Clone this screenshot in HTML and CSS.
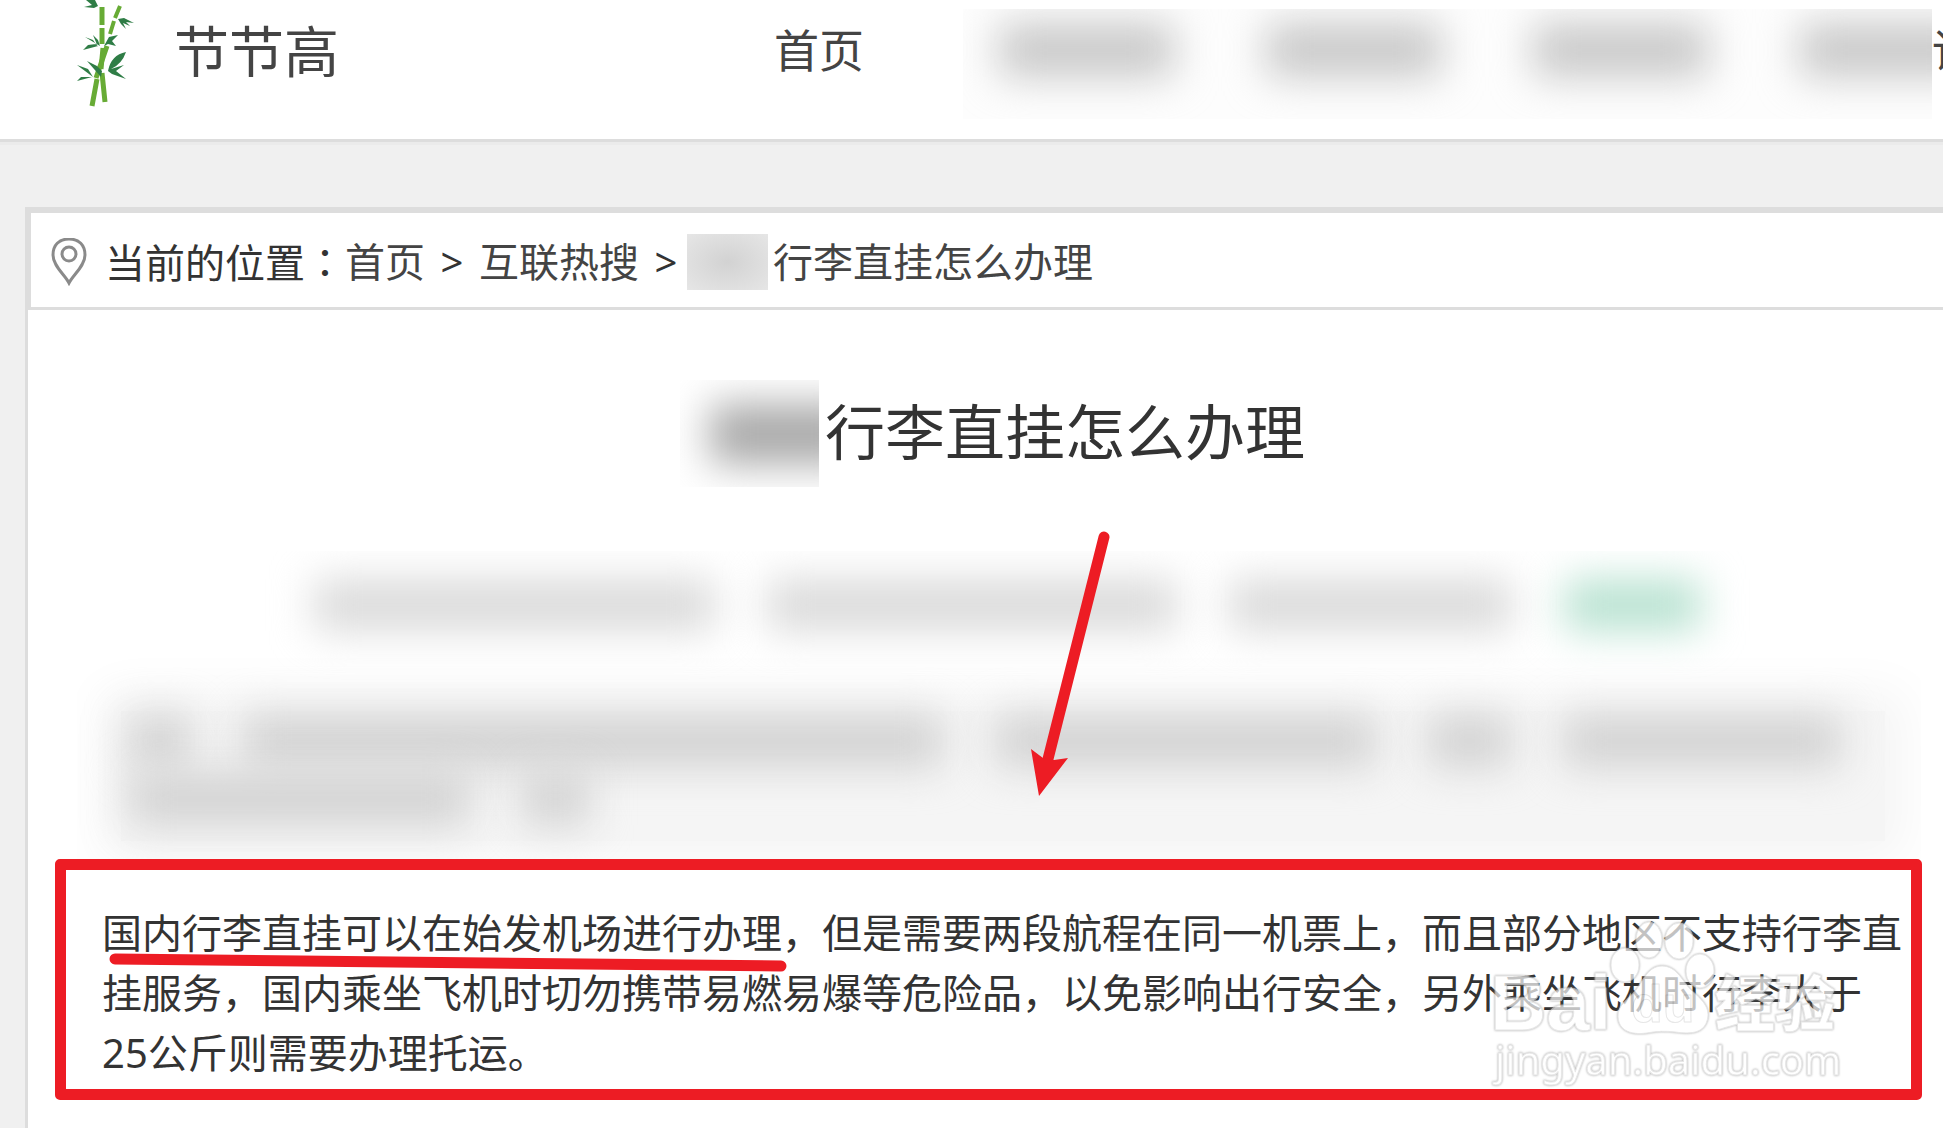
FILE: index.html
```html
<!DOCTYPE html>
<html lang="zh-CN">
<head>
  <meta charset="UTF-8" />
  <meta name="viewport" content="width=device-width, initial-scale=1.0"/>
  <title>行李直挂怎么办理</title>
  <link rel="stylesheet" href="styles.css">
</head>
<body>

  <!-- site header -->
  <header class="header">
    <a class="logo" href="#">
      <svg class="bamboo" viewBox="0 0 60 110" width="60" height="110" aria-hidden="true">
        <g fill="none" stroke="#67ab35" stroke-width="5">
          <path d="M24 7V25M24 28V44M25 48L23 69M24 73L27 102"/>
          <path stroke-width="4" d="M42 6L37 18M36 21L32 34"/>
          <path d="M29 46L18 78M19 79L14 106"/>
        </g>
        <g fill="#2f7d46">
          <path d="M8 0H17L20 6L16 8L6 7L14 5Z"/>
          <path d="M40 19L46 18L56 23L48 22L52 26L45 23L48 29L43 24Z"/>
          <path d="M20 47L15 35L20 40L22 46L7 37L15 40ZM20 46L5 50L10 45L18 44Z"/>
          <path d="M26 46L31 37L40 35L34 41L38 46L30 44Z"/>
          <path d="M30 71Q33 55 48 52Q44 64 33 69L46 65L38 71L48 79L34 74Z"/>
          <path d="M23 77L9 61L19 66L24 71ZM15 77L-1 65L10 69ZM14 77L-1 81L3 77Z"/>
        </g>
      </svg>
      <span>节节高</span>
    </a>
    <nav class="nav">
      <a href="#">首页</a>
      <div class="mosaic nav-mosaic">
        <i></i><i></i><i></i><i></i>
      </div>
      <a href="#">论</a>
    </nav>
  </header>

  <main class="card">
    <!-- breadcrumb -->
    <div class="crumbs">
      <svg class="pin" viewBox="0 0 36 48" width="36" height="48" aria-hidden="true">
        <path d="M18 45C14 37 2 28 2 17C2 7 8 1 18 1S34 7 34 17C34 28 22 37 18 45Z"/>
        <circle cx="18" cy="16" r="7"/>
      </svg>
      <span>当前的位置<span class="colon" lang="zh-TW">：</span></span>
      <a href="#">首页</a>
      <span class="sep">&gt;</span>
      <a href="#">互联热搜</a>
      <span class="sep">&gt;</span>
      <span class="mosaic crumb-mosaic"></span>
      <a href="#">行李直挂怎么办理</a>
    </div>

    <h1 class="title">
      <span class="mosaic title-mosaic"><i></i></span>
      <span>行李直挂怎么办理</span>
    </h1>

    <!-- article info and summary -->
    <div class="mosaic info">
      <div class="row meta">
        <i class="w41"></i><i class="w42"></i><i class="w29"></i><i class="w14 green"></i>
      </div>
      <div class="summary">
        <div class="row">
          <i class="w6"></i><i class="w68"></i><i class="w37"></i><i class="w8"></i><i class="w27"></i>
        </div>
        <div class="row last">
          <i class="w31"></i><i class="w6"></i><b></b>
        </div>
      </div>
    </div>

    <svg class="arrow" viewBox="0 0 84 270" width="84" height="270" aria-hidden="true">
      <path d="M78 8L22 230"/>
      <polygon points="5,220 17,229 28,231 42,229 13,267"/>
    </svg>

    <section class="answer">
      <p>国内行李直挂可以在始发机场进行办理，但是需要两段航程在同一机票上，而且部分地区不支持行李直挂服务，国内乘坐飞机时切勿携带易燃易爆等危险品，以免影响出行安全，另外乘坐飞机时行李大于25公斤则需要办理托运。</p>
      <svg class="underline" viewBox="0 0 680 24" width="680" height="24" aria-hidden="true">
        <path d="M8 8L674 15"/>
      </svg>
      <svg class="watermark" viewBox="0 0 360 175" width="360" height="175" aria-label="Baidu 经验">
        <text class="latin" x="3" y="111" font-size="78">Bai</text>
        <ellipse cx="138" cy="46" rx="14" ry="17"/>
        <ellipse cx="162" cy="21" rx="13" ry="18"/>
        <ellipse cx="192" cy="22" rx="14" ry="18"/>
        <ellipse cx="213" cy="52" rx="14" ry="17"/>
        <path d="M175 47C190 47 195 62 205 72C216 81 224 90 220 102C216 115 202 115 188 113C179 112 170 112 160 114C146 116 132 113 131 98C130 86 142 80 149 71C156 62 161 47 175 47Z"/>
        <text class="latin" x="144" y="103" font-size="52">du</text>
        <text class="han" x="228" y="107" font-size="60">经验</text>
        <text class="url" x="8" y="156" font-size="40">jingyan.baidu.com</text>
      </svg>
    </section>
  </main>

</body>
</html>
```

FILE: styles.css
```css
* { box-sizing: border-box; }
body {
  margin: 0;
  background: #f0f0f0;
  color: #333;
  font-family: "Noto Sans", "Noto Sans CJK SC", sans-serif;
  font-size: 40px;
  line-height: 60px;
  overflow-x: hidden;
}
a { color: #444; text-decoration: none; }
i { display: block; }

/* header */
.header {
  display: flex;
  align-items: flex-start;
  height: 142px;
  background: #fff;
  border-bottom: 3px solid #ddd;
  box-shadow: 0 3px 0 #ebebeb;
}
.logo {
  display: flex;
  flex: 0 0 774px;
  gap: 36px;
  padding-left: 78px;
  font-size: 55px;
  line-height: 102px;
}
.bamboo { overflow: visible; }
.nav {
  display: flex;
  flex: 1 0 0;
  font-size: 45px;
  line-height: 102px;
  white-space: nowrap;
}

/* pixelated areas */
.mosaic { overflow: hidden; }
.mosaic i { background: #d4d4d4; filter: blur(20px); }
.nav-mosaic {
  display: flex;
  flex: 0 0 969px;
  gap: 92px;
  height: 110px;
  margin: 9px 0 0 99px;
  padding: 14px 0 0 36px;
  background: #fdfdfd;
}
.nav-mosaic i { flex: 0 0 175px; height: 54px; background: #c8c8c8; }
.crumb-mosaic {
  width: 81px; height: 56px;
  margin-right: 5px;
  background: radial-gradient(#d2d2d2, #e6e6e6);
}
.title-mosaic {
  width: 139px; height: 107px;
  margin: 0 6px 0 -25px;
  padding: 24px 0 0 30px;
}
.title-mosaic i { width: 150px; height: 60px; background: #a8a8a8; }

/* card */
.card {
  position: relative;
  margin: 65px -42px 0 25px;
  padding-bottom: 28px;
  background: #fff;
  border: 3px solid #ddd;
  border-bottom: 0;
}
.crumbs {
  display: flex;
  align-items: center;
  height: 100px;
  padding: 4px 0 0 20px;
  border: 3px solid #ddd;
}
.pin { margin-right: 18px; fill: none; stroke: #8a8a8a; stroke-width: 3; }
.colon { font-family: "Noto Sans CJK TC", sans-serif; }
.sep { width: 54px; text-align: center; }
.sep + .mosaic { margin-left: -6px; }
.title {
  display: flex;
  justify-content: center;
  margin: 70px 0 64px;
  font-size: 60px;
  font-weight: 400;
  line-height: 104px;
}

/* info rows */
.info {
  height: 308px;
  margin: 0 61px 0 49px;
  padding-top: 28px;
}
.row { display: flex; gap: 52px; }
.meta { padding: 0 220px 0 237px; }
.row i { height: 52px; }
.meta i { background: #dadada; }
.meta .green { background: #b8e2d1; }
.summary {
  height: 130px;
  margin: 80px 36px 0 44px;
  padding: 4px 44px 0 8px;
  background: #f5f5f5;
  box-shadow: 0 0 48px 20px #f5f5f5;
}
.summary i { background: #d2d2d2; }
.last { margin-top: 6px; }
.last b { flex: 109 0 0; }
.w6 { flex: 6 0 0; }
.w8 { flex: 8 0 0; }
.w14 { flex: 14 0 0; }
.w27 { flex: 27 0 0; }
.w29 { flex: 29 0 0; }
.w31 { flex: 31 0 0; }
.w37 { flex: 37 0 0; }
.w41 { flex: 41 0 0; }
.w42 { flex: 42 0 0; }
.w68 { flex: 68 0 0; }

/* marked answer */
.answer {
  position: relative;
  margin: 0 60px 0 27px;
  padding: 33px 6px 6px 36px;
  border: 11px solid #ed1c24;
  border-radius: 5px;
}
.answer p { margin: 0; }
.arrow {
  position: absolute;
  top: 319px; left: 998px;
  fill: #ed1c24;
}
.arrow path, .underline path {
  fill: none;
  stroke: #ed1c24;
  stroke-width: 11;
  stroke-linecap: round;
}
.underline { position: absolute; top: 81px; left: 41px; }
.watermark {
  position: absolute;
  top: 49px; right: 64px;
  fill: #fff;
  stroke: #ddd;
  stroke-width: 1;
  stroke-linejoin: round;
  opacity: 0.7;
  overflow: visible;
  filter: drop-shadow(0 0 1px #888);
}
.latin { font-family: "Liberation Sans", sans-serif; font-weight: 700; }
.han { font-family: "Noto Sans CJK SC", sans-serif; font-weight: 900; }
.url { font-family: "Noto Sans", sans-serif; }
```
